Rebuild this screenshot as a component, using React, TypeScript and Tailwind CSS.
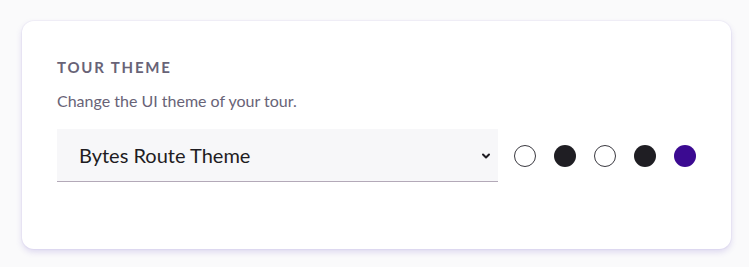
import { useState } from "react";

const swatches = [
  { id: "light", className: "bg-white border border-[#3a3940]" },
  { id: "dark", className: "bg-[#1f1e23]" },
  { id: "light-alt", className: "bg-white border border-[#3a3940]" },
  { id: "dark-alt", className: "bg-[#1f1e23]" },
  { id: "brand", className: "bg-[#3b0a91]" },
];

export default function App() {
  const [theme, setTheme] = useState("bytes-route");

  return (
    <div className="min-h-[267px] bg-[#fafafb] pl-[22px] pr-[18px] pt-[21px] font-['Lato',sans-serif]">
      <div className="h-[228px] rounded-[12px] bg-white px-[35px] pt-[36px] shadow-[0_3px_6px_rgba(90,60,190,0.18),0_0_0_1px_rgba(120,100,200,0.05)]">
        <h2 className="text-[15px] font-bold uppercase leading-[20px] tracking-[0.12em] text-[#686377]">
          Tour theme
        </h2>
        <p className="mt-[14px] text-[16px] leading-[20px] text-[#686377]">
          Change the UI theme of your tour.
        </p>

        <div className="mt-[18px] flex items-center">
          <div className="relative w-[441px]">
            <select
              value={theme}
              onChange={(e) => setTheme(e.target.value)}
              className="h-[53px] w-full appearance-none border-b border-[#b3a9b8] bg-[#f7f7f9] pl-[22px] pr-10 text-[20px] text-[#1e1c22] outline-none"
            >
              <option value="bytes-route">Bytes Route Theme</option>
              <option value="light">Light Theme</option>
              <option value="dark">Dark Theme</option>
            </select>
            <svg
              className="pointer-events-none absolute right-[7px] top-1/2 h-[10px] w-[10px] -translate-y-1/2"
              viewBox="0 0 10 10"
              fill="none"
              stroke="#1e1c22"
              strokeWidth="2"
              strokeLinecap="round"
              strokeLinejoin="round"
            >
              <path d="M2 3.5 5 6.5 8 3.5" />
            </svg>
          </div>

          <div className="ml-[16px] flex items-center gap-[18px]">
            {swatches.map((s) => (
              <button
                key={s.id}
                type="button"
                className={`h-[22px] w-[22px] rounded-full ${s.className}`}
              />
            ))}
          </div>
        </div>
      </div>
    </div>
  );
}
